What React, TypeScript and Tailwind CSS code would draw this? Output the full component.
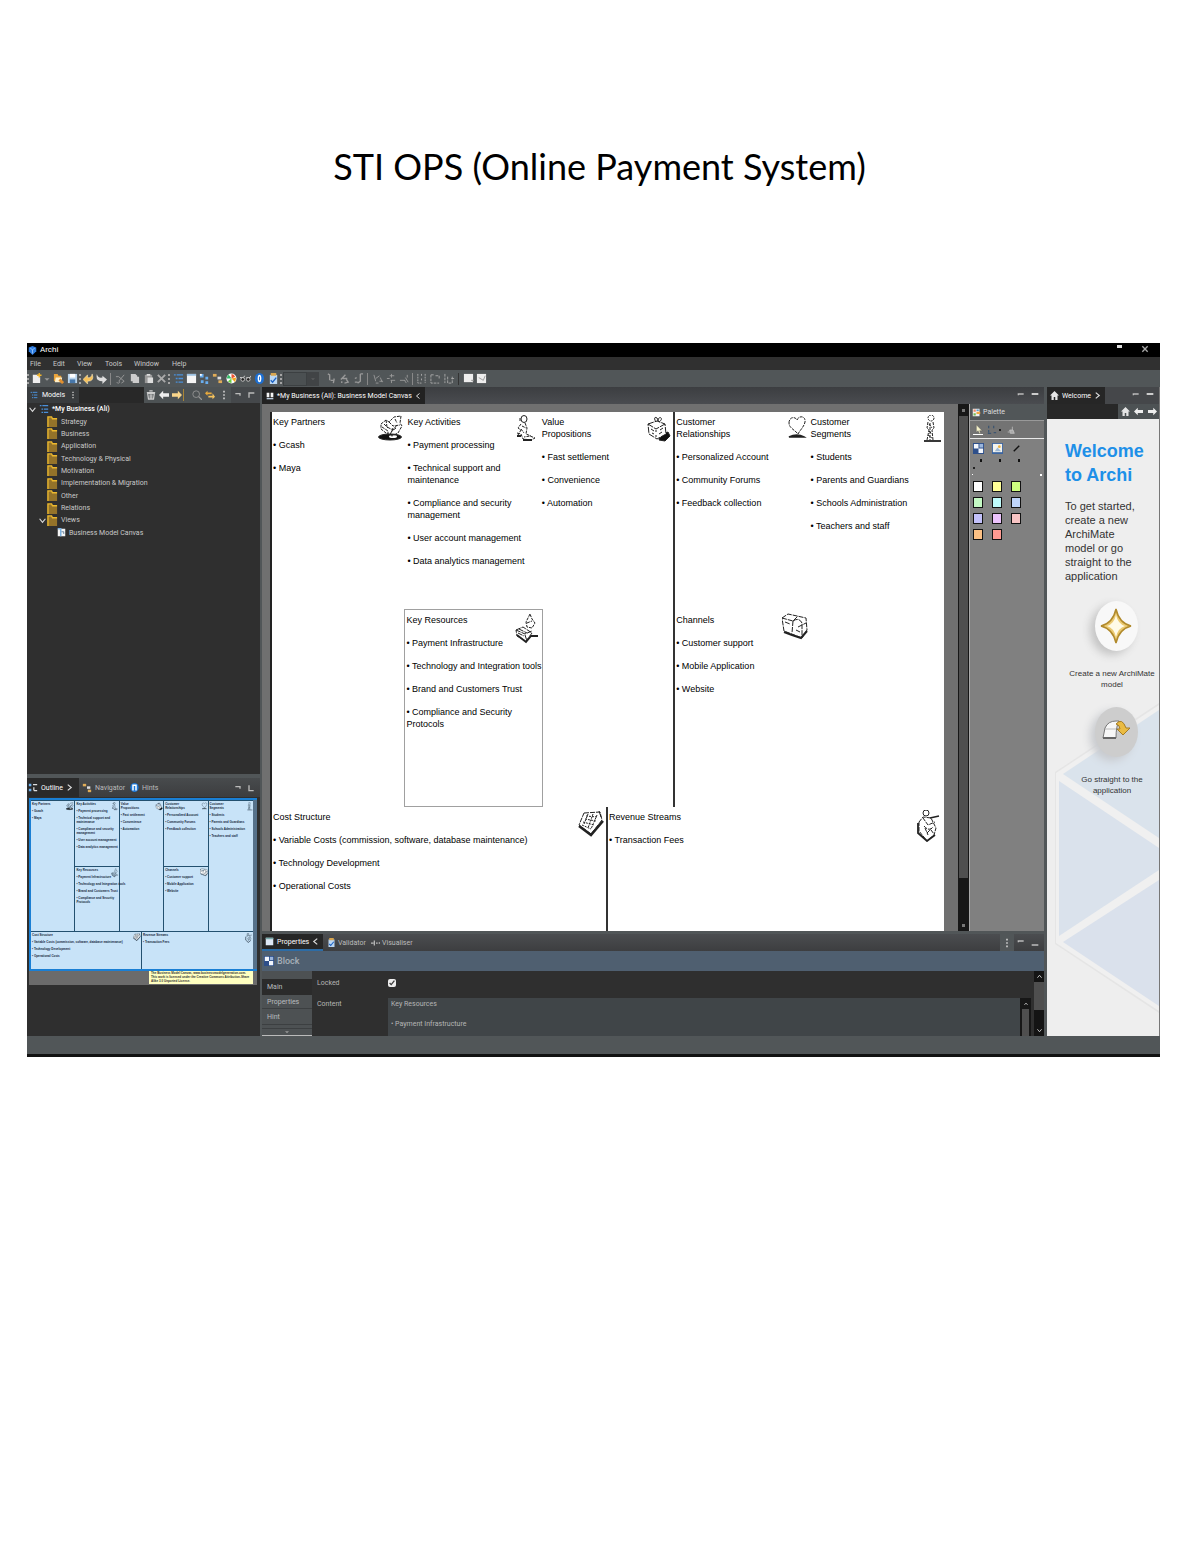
import React from "react";

type Block = { title: string[]; items: string[][]; art: string };

const blocks: Record<string, Block> = {
  partners: { title: ["Key Partners"], items: [["Gcash"], ["Maya"]], art: "partners" },
  activities: {
    title: ["Key Activities"],
    items: [
      ["Payment processing"],
      ["Technical support and", "maintenance"],
      ["Compliance and security", "management"],
      ["User account management"],
      ["Data analytics management"],
    ],
    art: "activities",
  },
  resources: {
    title: ["Key Resources"],
    items: [
      ["Payment Infrastructure"],
      ["Technology and Integration tools"],
      ["Brand and Customers Trust"],
      ["Compliance and Security", "Protocols"],
    ],
    art: "resources",
  },
  value: {
    title: ["Value", "Propositions"],
    items: [["Fast settlement"], ["Convenience"], ["Automation"]],
    art: "value",
  },
  relationships: {
    title: ["Customer", "Relationships"],
    items: [["Personalized Account"], ["Community Forums"], ["Feedback collection"]],
    art: "relationships",
  },
  channels: {
    title: ["Channels"],
    items: [["Customer support"], ["Mobile Application"], ["Website"]],
    art: "channels",
  },
  segments: {
    title: ["Customer", "Segments"],
    items: [["Students"], ["Parents and Guardians"], ["Schools Administration"], ["Teachers and staff"]],
    art: "segments",
  },
  cost: {
    title: ["Cost Structure"],
    items: [
      ["Variable Costs (commission, software, database maintenance)"],
      ["Technology Development"],
      ["Operational Costs"],
    ],
    art: "cost",
  },
  revenue: { title: ["Revenue Streams"], items: [["Transaction Fees"]], art: "revenue" },
};

const art: Record<string, React.ReactNode> = {
  partners: (
    <>
      <ellipse cx="12" cy="22" rx="11.5" ry="3" fill="#111" />
      <ellipse cx="15" cy="21.500" rx="4" ry="1.500" fill="#fff" stroke="none" />
      <path d="M3 9l5-4 3 2 5-5 7-1-1 7 2 3-4 7-6 3-6-3-5-4zM8 5l1 7 6 3 4-5M11 7l4 4 7-1M4 12l6 4v5M15 13l-3 7M6 9l4 4M17 4l2 4M13 17l5-4" strokeDasharray="3 1" />
    </>
  ),
  activities: (
    <g transform="translate(2 0)">
      <ellipse cx="9" cy="4" rx="3" ry="3.500" />
      <path d="M5 3v4M6 9l-3 4 3 2-3 5M10 8l2 5-1 6 5 2M2 18l4 1 2 5 8 1 4-2-5-2-6 1M7 11l4 2M6 14l3 4" strokeDasharray="3 1" />
      <path d="M2 21h4M8 25h9" strokeWidth="1.800" />
    </g>
  ),
  value: (
    <g transform="translate(2 0)">
      <path d="M14 20l7-3 2 4-5 5-6-1z" fill="#111" />
      <path d="M1 9l9-3 8 3 1 10-9 5-8-5zM1 9l8 5 9-5" fill="#fff" strokeDasharray="6 1" />
      <path d="M9 7c-4-6 2-6 2-1 0-6 7-3 1 1M4 14l3 2M13 15l3-2M12 19l3-2M5 18l2 1M9 15v2M9 20v2" />
    </g>
  ),
  relationships: (
    <g transform="translate(5 0)">
      <path d="M2 8c0-6 6-7 8-3 2-5 9-4 8 2-1 5-5 8-7 12-3-4-9-6-9-11z" strokeDasharray="3 1" />
      <path d="M2 22q8-4 15 0z" fill="#111" strokeWidth="1.500" />
    </g>
  ),
  segments: (
    <g transform="translate(7 0)">
      <ellipse cx="8" cy="3" rx="3" ry="3" strokeDasharray="2 1" />
      <path d="M5 7l-1 6 2 2-2 10M10 7l1 6-2 2 1 10M7 8v17M6 9l3 4M6 16l3 3M5 20l4 3" strokeDasharray="3 1" />
      <path d="M1 26h17" strokeWidth="1.800" />
    </g>
  ),
  resources: (
    <>
      <path d="M16 1l-2 4-2 4 1 5 5 1 3-5-3-4zM13 10l5-2" strokeDasharray="3 1" />
      <path d="M2 17l7-3 9 6-6 8-9-5zM2 17l9 4 7-3M5 16l8 4M4 20l6 3M11 22l2 6" strokeDasharray="5 1" />
      <path d="M3 22l9 7 5-6h7" strokeWidth="1.800" />
    </>
  ),
  channels: (
    <g transform="translate(-1 0)">
      <path d="M1 5l6-4 18 4 1 12-5 8-18-7zM1 5l11 3 5-5M12 8l-1 12M12 8q6-4 9 2v12M17 14l8-4M4 9l5 2M15 17l4 2" fill="#fff" strokeDasharray="5 1" />
      <path d="M3 19l8 3 9 3 6-7" strokeWidth="2" />
    </g>
  ),
  cost: (
    <>
      <path d="M6 3l16-1 2 8-11 14L1 15z" fill="#fff" strokeDasharray="5 1" />
      <path d="M8 6l11 1M7 9l11 2M5 12l11 3M4 15l9 4M10 4L6 14M15 4l-5 14M19 5l-6 14" strokeDasharray="2 1" />
      <path d="M1 16l12 9L25 11" strokeWidth="2.500" />
      <path d="M21 1l2 6" />
    </>
  ),
  revenue: (
    <>
      <ellipse cx="10" cy="3" rx="3" ry="3" />
      <path d="M3 12l4-5 8 1 5 10-2 7-7 6-8-10zM7 8l5 7 7-3M8 16q5 6 9 1M11 23l5-5M9 18l3 7M15 20l3 4" strokeDasharray="4 1" />
      <path d="M2 13v10l9 8 8-6" strokeWidth="1.800" />
      <path d="M14 8l9-2" strokeWidth="1.500" />
    </>
  ),
};

function Sketch({ name }: { name: string }) {
  return (
    <svg viewBox="0 0 27 32" className="-mt-2 h-8 w-[27px] shrink-0" fill="none" stroke="#222" strokeWidth="1" aria-hidden>
      {art[name]}
    </svg>
  );
}

function Cell({ id, className = "" }: { id: string; className?: string }) {
  const b = blocks[id];
  const head = b.title.length === 2 ? "h-6" : "h-3";
  return (
    <section className={`min-w-0 px-px pt-1 font-['Liberation_Sans',sans-serif] text-[9px] leading-[12px] whitespace-nowrap text-black ${className}`}>
      <div className={`flex justify-between ${head}`}>
        <h2>
          {b.title.map((t) => (
            <span key={t} className="block">{t}</span>
          ))}
        </h2>
        <div className="pt-[7px]"><Sketch name={b.art} /></div>
      </div>
      <ul className="mt-[11px] flex flex-col gap-[11px]">
        {b.items.map((lines) => (
          <li key={lines[0]}>
            {lines.map((l, i) => (
              <span key={l} className="block">{i === 0 ? `• ${l}` : l}</span>
            ))}
          </li>
        ))}
      </ul>
    </section>
  );
}

function MiniCell({ id, className = "" }: { id: string; className?: string }) {
  const b = blocks[id];
  const head = b.title.length === 2 ? "h-[11px]" : "h-[7px]";
  return (
    <div className={`min-w-0 pt-px pl-px ${className}`}>
      <div className={`flex justify-between ${head}`}>
        <div>{b.title.map((t) => <p key={t}>{t}</p>)}</div>
        <svg viewBox="0 0 27 32" className="h-2.5 w-2 shrink-0" fill="none" stroke="#345" strokeWidth="1.500" aria-hidden>{art[b.art]}</svg>
      </div>
      <div className="flex flex-col gap-[3px]">
        {b.items.map((lines) => (
          <div key={lines[0]}>
            {lines.map((l, i) => <p key={l}>{i === 0 ? `• ${l}` : l}</p>)}
          </div>
        ))}
      </div>
    </div>
  );
}

const glyphs: Record<string, React.ReactNode> = {
  new: (<><path d="M2 2h6l2 2v7H2z" fill="#eee" /><path d="M9 0v5M6.500 2.500h5" stroke="#f3b62b" strokeWidth="1.500" /></>),
  caret: <path d="M3 5h6L6 8z" fill="#999" />,
  open: (<><path d="M1 1h4l1 2h3v6H1z" fill="#e9a43c" /><path d="M3 5h7l-1 5H2z" fill="#fff0c8" /><path d="M7 7l4 4" stroke="#e09030" strokeWidth="3" /></>),
  save: (<><path d="M1 1h10v10H1z" fill="#b8d4ee" /><path d="M3 1h6v4H3z" fill="#fff" /><path d="M3 7h6v4H3z" fill="#4777aa" /></>),
  undo: <path d="M0 7l5-5v3q4 1 5-4 3 8-5 8v3z" fill="#f6c15b" stroke="#fff3cf" strokeWidth=".5" />,
  redo: <path d="M12 7L7 3v2Q2 6 1 1q-2 8 6 8v3z" fill="#ddd" />,
  cut: <path d="M1 4h3l6 5M4 9l6-7M2 10a1.500 1.500 0 103-1M7 11l3-2" stroke="#999" fill="none" />,
  copy: <path d="M2 1h5l2 2v1h2v7H4V9H2z" fill="#ccc" />,
  paste: (<><path d="M2 2h8v9H2z" fill="#999" /><path d="M4 1h4v2H4zM5 5h6v6H5z" fill="#ddd" /></>),
  cross: <path d="M2 2l8 8M10 2l-8 8" stroke="#aaa" strokeWidth="2" />,
  tree: <path d="M1 2h2M4 2h7M3 6h2M6 6h5M3 10h2M6 10h5" stroke="#4a90d9" strokeWidth="1.500" />,
  window: (<><path d="M1 1h10v10H1z" fill="#f5f5f5" /><path d="M1 1h10v2H1z" fill="#9bc0e0" /></>),
  nav: (<><path d="M1 1h4v4H1zM7 4h3v3H7zM7 9h3v3H7zM2 8h3v3H2z" fill="#69aef0" /><path d="M1 1h2v2H1z" fill="#fff" /></>),
  rel: (<><path d="M1 1h4v3H1z" fill="#e0ac58" /><path d="M6 4h4v3H6z" fill="#ddd" /><path d="M7 8h4v3H7z" fill="#e0ac58" /></>),
  swatch: (<><circle cx="6" cy="6" r="5.500" fill="#fff" /><path d="M6 6V1a5 5 0 014 3z" fill="#e53" /><path d="M6 6H1a5 5 0 012-4z" fill="#3b6" /><path d="M6 6l4 4 1-5z" fill="#f4a51c" /><path d="M6 6v5a5 5 0 01-4-2z" fill="#6c4" /></>),
  glasses: (<><path d="M0 5h4l1-2M7 5h4l1-2" stroke="#ddd" fill="none" /><circle cx="3" cy="7" r="2" fill="#222" stroke="#ccc" /><circle cx="9" cy="7" r="2" fill="#222" stroke="#ccc" /></>),
  info: (<><ellipse cx="6" cy="6" rx="5" ry="6" fill="#1d6fd1" /><ellipse cx="6" cy="6" rx="2" ry="4" fill="#fff" /><path d="M6 4v4" stroke="#1d6fd1" /></>),
  check: (<><path d="M2 2h8v10H2z" fill="#bcd7f2" /><path d="M3 0h6v3H3z" fill="#d9a64f" /><path d="M3 8l2 2 4-5" stroke="#1c62c4" strokeWidth="1.500" fill="none" /></>),
  f1: <path d="M2 1l2 1v6M5 8h3M9 6l-1 5" stroke="#999" fill="none" strokeWidth="1.500" />,
  f2: <path d="M2 7l3-3 2-2M4 6h5M8 7l2 3-4 1M3 9v2" stroke="#999" fill="none" strokeWidth="1.500" />,
  f3: <path d="M8 1h3M8 1v8l-3 2M2 6l2-1M2 10h3" stroke="#999" fill="none" strokeWidth="1.500" />,
  a1: <path d="M1 2l2 7M3 6l4-3M7 9h4M8 5l2 5M3 11h3" stroke="#999" fill="none" />,
  a2: <path d="M1 6h3M6 1v4M4 3h5M6 8v3M5 8h5" stroke="#999" fill="none" />,
  a3: <path d="M1 8h6M7 5l3 5M9 2v3M6 8l2 3" stroke="#999" fill="none" />,
  g1: <path d="M2 1v10h4M6 1v3M6 6v3M10 1v10" stroke="#aaa" fill="none" strokeDasharray="2 1" />,
  g2: <path d="M1 2h4M1 2v9h9M6 3h4v4" stroke="#aaa" fill="none" strokeDasharray="3 1" />,
  g3: <path d="M1 1v10M4 4v7h5V3M8 6h4" stroke="#aaa" fill="none" strokeDasharray="3 1" />,
  block: (<><path d="M1 1h10v9H1z" fill="#eee" /><path d="M9 8h3M10 10h1" stroke="#888" /></>),
  note: (<><path d="M1 1h10v10H1z" fill="#eee" /><path d="M3 5l5 3 2-5" stroke="#999" fill="none" /></>),
  trash: <path d="M1 3h10M4 1h4M2 4h8l-1 7H3zM5 5v6M7 5v6" stroke="#ccc" fill="none" strokeWidth="1.500" />,
  left: <path d="M0 6l5-5v3h7v4H5v3z" fill="#eee" />,
  right: <path d="M12 6L7 1v3H0v4h7v3z" fill="#eee" />,
  rightGold: <path d="M12 6L7 1v3H0v4h7v3z" fill="#f9d58a" />,
  search: <><circle cx="5" cy="5" r="4" stroke="#999" fill="none" /><path d="M8 8l4 4" stroke="#999" strokeWidth="1.500" /></>,
  link: <><path d="M3 1L0 4l3 3V5h5V3H3z" fill="#e8a93c" /><path d="M9 4l3 4-3 3V9H4V7h5z" fill="#f4c25e" /></>,
  dots: <path d="M6 1v2M6 5v2M6 9v2" stroke="#ccc" strokeWidth="2" />,
  min: <path d="M2 4h8M9 4v3" stroke="#bbb" strokeWidth="2" fill="none" />,
  max: <path d="M3 10V3h8" stroke="#bbb" strokeWidth="2" fill="none" />,
  minL: <path d="M2 5V3h8" stroke="#bbb" strokeWidth="2" fill="none" />,
  bar: <path d="M1 3h10" stroke="#ccc" strokeWidth="3" />,
  low: <path d="M1 9h10" stroke="#ccc" strokeWidth="2" />,
  corner: <path d="M3 2v8h7" stroke="#bbb" strokeWidth="2" fill="none" />,
  close: <path d="M3 1l6 5-6 5" stroke="#ddd" strokeWidth="2" fill="none" />,
  closeL: <path d="M9 1L3 6l6 5" stroke="#ddd" strokeWidth="2" fill="none" />,
  folder: (<><path d="M1 1h4l1 2h5v9H1z" fill="#94732a" /><path d="M1 12V1h4l1 2h5" stroke="#edb92e" strokeWidth="1.500" fill="none" /></>),
  view: (<><path d="M1 1h10v10H1z" fill="#f5f5f5" /><path d="M1 1h4v10" stroke="#7eb3e2" strokeWidth="2" fill="none" /><path d="M6 5h3v3" stroke="#468" fill="none" /></>),
  tab: (<><path d="M1 1h4v7H1zM7 1h4v7H7z" fill="#f5f5f5" /><path d="M1 10h10" stroke="#bcd" strokeWidth="2" /></>),
  home: (<><path d="M6 0l6 6h-2v6H7V8H5v4H2V6H0z" fill="#e5e5e5" /></>),
  archi: (<><path d="M6 0l5 2v5l-5 5-5-5V2z" fill="#2f7de0" /><path d="M3 3l3 2 3-2M6 5v5" stroke="#a9d0ff" fill="none" /></>),
  props: (<><path d="M1 1h10v10H1z" fill="#dfe8f5" /><path d="M1 2h10" stroke="#7aa" strokeWidth="2" /></>),
  outline: (<><path d="M1 1h3v3H1zM1 7h3v3H1z" fill="#6db0ee" /><path d="M6 2h5M7 5v4M7 9h4" stroke="#ddd" strokeWidth="1.500" fill="none" /></>),
  hints: (<><ellipse cx="6" cy="6" rx="5.500" ry="6" fill="#1d78d8" /><path d="M4 3v7M8 3v7M3 3h6" stroke="#fff" strokeWidth="2" /></>),
  vis: <path d="M0 6h3M4 3v6M6 6h2M10 5v2" stroke="#bbb" strokeWidth="1.500" />,
  palette: (<><path d="M1 1h9v10H1z" fill="#f0f0f0" /><path d="M2 2h3v3H2z" fill="#e86" /><path d="M6 5h5v3H6z" fill="#f2a742" /><path d="M2 7h3v3H2z" fill="#7b5" /><path d="M6 2h3v2H6z" fill="#59c" /></>),
  blocks: (<><path d="M0 0h12v12H0z" fill="#2e4f8a" /><path d="M1 1h5v5H1zM6 6h5v5H6z" fill="#f2f6fc" /><path d="M7 1h4v4H7z" fill="#9ab5dc" /></>),
  sticky: (<><path d="M0 0h12v12H0z" fill="#3c65a0" /><path d="M1 1h10v9H1z" fill="#f4f4ee" /><path d="M3 9l3-4 4 4z" fill="#9db9d6" /><circle cx="8" cy="4" r="1.500" fill="#efb23f" /></>),
  slash: <path d="M3 9l6-6" stroke="#111" strokeWidth="1.500" />,
  cursor: <path d="M4 1v9l2-2 2 4 1-1-1-3h3z" fill="#f4f0c8" stroke="#555" strokeWidth=".5" />,
  marquee: <path d="M2 1v3M2 6v3M8 1v3M8 9h3M1 10h4" stroke="#3d5570" strokeWidth="1.500" />,
  wand: <path d="M8 1v5M4 6h5l2 5H5zM1 9h3" fill="#aaa" stroke="#ccc" />,
};

function Icon({ name, className = "size-3" }: { name: string; className?: string }) {
  return (
    <svg viewBox="0 0 12 12" className={`shrink-0 ${className}`} fill="none" aria-hidden>
      {glyphs[name]}
    </svg>
  );
}

function IconButton({ name, label, className = "w-3.5", icon = "size-[11px]" }: { name: string; label: string; className?: string; icon?: string }) {
  return (
    <button type="button" aria-label={label} className={`flex h-full shrink-0 items-center justify-center ${className}`}>
      <Icon name={name} className={icon} />
    </button>
  );
}

const Grip = () => <div className="h-2.5 w-[3px] shrink-0 border-l-2 border-dotted border-[#a5a5a5]" />;

const menus = ["File", "Edit", "View", "Tools", "Window", "Help"];
const menuWidths = ["w-[23px]", "w-[24px]", "w-[28px]", "w-[29px]", "w-[38px]", "w-[30px]"];

const folders = ["Strategy", "Business", "Application", "Technology & Physical", "Motivation", "Implementation & Migration", "Other", "Relations"];

const swatches = [
  "bg-white", "bg-[#ffff97]", "bg-[#cfff80]", "bg-[#c4fac4]", "bg-[#bffcfc]", "bg-[#bfd5fa]",
  "bg-[#c3c1fb]", "bg-[#ecc3fd]", "bg-[#f8c4c4]", "bg-[#fcc084]", "bg-[#ff9a92]",
];

function Toolbar() {
  return (
    <div role="toolbar" aria-label="Main" className="flex h-[17px] items-center overflow-hidden bg-[#515658]">
      <Grip />
      <IconButton name="new" label="New" className="w-[13px]" />
      <IconButton name="caret" label="New options" className="w-2" icon="size-2.5" />
      <IconButton name="open" label="Open" />
      <IconButton name="save" label="Save" />
      <Grip />
      <IconButton name="undo" label="Undo" className="w-[13px]" />
      <IconButton name="redo" label="Redo" className="w-[13px]" />
      <div className="mx-0.5 h-3 w-px shrink-0 bg-[#888]" />
      <IconButton name="cut" label="Cut" />
      <IconButton name="copy" label="Copy" />
      <IconButton name="paste" label="Paste" />
      <IconButton name="cross" label="Delete" className="w-[13px]" />
      <Grip />
      <IconButton name="tree" label="Model tree" />
      <IconButton name="window" label="Properties" className="w-[13px]" />
      <IconButton name="nav" label="Outline" className="w-[13px]" />
      <IconButton name="rel" label="Navigator" className="w-[13px]" />
      <IconButton name="swatch" label="Palette" />
      <IconButton name="glasses" label="Visualiser" />
      <IconButton name="info" label="Hints" />
      <IconButton name="check" label="Validator" />
      <Grip />
      <select aria-label="Zoom" disabled className="h-3.5 w-6 shrink-0 appearance-none border border-[#3c4042] bg-[#4b5052]" />
      <div className="flex h-3.5 w-3 shrink-0 items-center justify-center bg-[#414446]"><Icon name="caret" className="size-2 opacity-30" /></div>
      <div className="w-[5px] shrink-0" />
      <IconButton name="f1" label="Font" />
      <IconButton name="f2" label="Fill colour" className="w-[13px]" />
      <IconButton name="f3" label="Line colour" />
      <div className="mr-[3px] ml-0.5 h-3 w-px shrink-0 bg-[#888]" />
      <IconButton name="a1" label="Align left" />
      <IconButton name="a2" label="Align centre" className="w-[13px]" />
      <IconButton name="a3" label="Align right" className="w-[13px]" />
      <div className="mx-px h-3 w-px shrink-0 bg-[#888]" />
      <IconButton name="g1" label="Match width" />
      <IconButton name="g2" label="Match height" />
      <IconButton name="g3" label="Match size" />
      <div className="mx-0.5 h-3 w-px shrink-0 bg-[#333]" />
      <IconButton name="block" label="Block" />
      <IconButton name="note" label="Note" className="w-[13px]" />
    </div>
  );
}

function ModelsPanel() {
  return (
    <section className="flex h-[387px] flex-col">
      <div className="flex h-4 bg-[#45484b]">
        <div className="flex w-[52px] items-center gap-1 bg-[#393c3e] pl-[3px] text-white">
          <Icon name="tree" className="size-2" /> Models <Icon name="dots" className="size-2" />
        </div>
        <div className="flex-1 bg-[#282828]" />
        <div className="flex bg-[#4d5254]">
          <IconButton name="trash" label="Delete" className="w-[13px]" icon="size-2.5" />
          <IconButton name="left" label="Back" className="w-[13px]" icon="size-2.5" />
          <IconButton name="rightGold" label="Forward" className="w-[13px]" icon="size-2.5" />
          <div className="my-0.5 mr-1.5 w-px bg-[#a98537]" />
          <IconButton name="search" label="Search" className="w-[13px]" icon="size-2.5" />
          <IconButton name="link" label="Link to view" icon="size-2.5" />
          <IconButton name="dots" label="View menu" icon="size-2.5" />
        </div>
        <IconButton name="min" label="Minimize" icon="size-2" className="w-[13px]" />
        <IconButton name="max" label="Maximize" icon="size-2" className="mr-[3px] w-[13px]" />
      </div>
      <div className="flex-1 bg-[#2f2f2f]">
        <ul role="tree" className="grid h-[136px] grid-rows-11 items-center text-[#c9c9c9]">
          <li role="treeitem" className="flex items-center gap-[3px] pl-0.5 font-medium text-white">
            <Icon name="close" className="size-[7px] rotate-90" />
            <Icon name="tree" className="size-2.5" /> *My Business (Ali)
          </li>
          {folders.map((f) => (
            <li role="treeitem" key={f} className="flex items-center gap-[3px] pl-5">
              <Icon name="folder" className="size-[11px]" /> {f}
            </li>
          ))}
          <li role="treeitem" className="flex items-center gap-[3px] pl-3">
            <Icon name="close" className="mr-[-2px] size-[7px] rotate-90" />
            <Icon name="folder" className="size-[11px]" /> Views
          </li>
          <li role="treeitem" className="flex items-center gap-[3px] pl-[30px]">
            <Icon name="view" className="size-[9px]" /> Business Model Canvas
          </li>
        </ul>
      </div>
    </section>
  );
}

function OutlinePanel() {
  const line = "border-[#23506f]";
  return (
    <section className="mt-1 flex flex-1 flex-col bg-[#2f2f2f]">
      <div className="flex h-[19px] items-center bg-linear-to-b from-[#484b4d] to-[#3c3d3f] text-[#bbb]">
        <button type="button" className="flex h-full w-[52px] items-center gap-[3px] bg-[#2a2a2a] pl-px text-white">
          <Icon name="outline" className="size-2.5" /> Outline <Icon name="close" className="size-[7px]" />
        </button>
        <button type="button" className="flex w-[51px] items-center gap-[3px] pl-[3px] text-left">
          <Icon name="rel" className="size-2.5" /> Navigator
        </button>
        <button type="button" className="flex items-center gap-[3px]">
          <Icon name="hints" className="size-[9px]" /> Hints
        </button>
        <div className="flex-1" />
        <IconButton name="min" label="Minimize" icon="size-2" className="w-[13px]" />
        <IconButton name="corner" label="Maximize" icon="size-2" className="mr-[3px] w-[13px]" />
      </div>
      <div className="mx-0.5 mr-[3px] mt-px bg-[#6b6b6b]">
        <div className="border-2 border-r-0 border-[#1a7fd4] bg-[#56718a] pr-1">
          <div className={`border-t bg-[#c8e3f8] font-['Liberation_Sans',sans-serif] text-[3px] leading-[4px] font-bold whitespace-nowrap text-[#16283c] ${line}`}>
            <div className="grid h-[130px] grid-cols-5">
              <MiniCell id="partners" className={`border-r ${line}`} />
              <div className={`grid min-w-0 grid-rows-2 border-r ${line}`}>
                <MiniCell id="activities" />
                <MiniCell id="resources" className={`border-t ${line}`} />
              </div>
              <MiniCell id="value" className={`border-r ${line}`} />
              <div className={`grid min-w-0 grid-rows-2 border-r ${line}`}>
                <MiniCell id="relationships" />
                <MiniCell id="channels" className={`border-t ${line}`} />
              </div>
              <MiniCell id="segments" />
            </div>
            <div className={`grid h-[38px] grid-cols-2 border-t ${line}`}>
              <MiniCell id="cost" className={`border-r ${line}`} />
              <MiniCell id="revenue" />
            </div>
          </div>
        </div>
        <div className="flex h-3.5 justify-end pr-1">
          <p className="h-[13px] w-[104px] bg-[#ffffc0] px-0.5 font-['Liberation_Sans',sans-serif] text-[3px] leading-[4px] font-bold text-[#333]">
            The Business Model Canvas, www.businessmodelgeneration.com. This work is licensed under the Creative Commons Attribution-Share Alike 3.0 Unported License.
          </p>
        </div>
      </div>
    </section>
  );
}

function Palette() {
  return (
    <aside className="flex w-[75px] shrink-0 flex-col border-l border-[#aaa] bg-[#808080]">
      <div className="flex h-4 items-center gap-0.5 bg-[#515658] pl-0.5 text-[#ddd]">
        <Icon name="palette" className="size-[9px]" /> Palette
      </div>
      <div className="flex h-[19px] items-center border-t border-b border-t-[#999] border-b-[#e8e8e8] bg-[#737373] pl-[3px]">
        <button type="button" aria-label="Select" className="border-b border-white"><Icon name="cursor" className="size-2.5" /></button>
        <button type="button" aria-label="Marquee" className="ml-1"><Icon name="marquee" className="size-2.5" /></button>
        <span className="ml-0.5 size-0.5 bg-[#222]" />
        <button type="button" aria-label="Format painter" className="ml-1.5"><Icon name="wand" className="size-2" /></button>
      </div>
      <div className="grid grid-cols-[repeat(3,19px)] justify-items-start gap-y-[5px] pt-1 pl-[3px]">
        <IconButton name="blocks" label="Block" className="h-3 w-[11px]" />
        <IconButton name="sticky" label="Sticky" className="h-3 w-[11px]" />
        <IconButton name="slash" label="Connection" className="h-3 w-[11px]" />
        {["a", "b", "c"].map((k) => (
          <span key={k} className="h-[3px] w-[9px] border-r-2 border-[#111]" />
        ))}
      </div>
      <div className="mt-[5px] pl-[3px]"><i className="block size-0.5 bg-[#222]" /></div>
      <div className="mt-[5px] flex justify-between px-0.5"><i className="size-px bg-white" /><i className="size-0.5 bg-white" /></div>
      <div className="mt-[5px] grid grid-cols-[repeat(3,19px)] gap-y-[5px] pl-[3px]">
        {swatches.map((c, i) => (
          <button key={c} type="button" aria-label={`Colour ${i + 1}`} className={`h-[11px] w-2.5 border border-[#111] ${c}`} />
        ))}
      </div>
    </aside>
  );
}

function Editor() {
  return (
    <section className="flex flex-col">
      <div className="flex h-[17px] items-center bg-linear-to-b from-[#3c3e41] to-[#4a4c50]">
        <button type="button" className="flex h-full items-center gap-[3px] bg-[#222] pr-1 pl-1 whitespace-nowrap text-white">
          <Icon name="tab" className="size-2" /> *My Business (Ali): Business Model Canvas <Icon name="closeL" className="size-1.5" />
        </button>
        <div className="flex-1" />
        <IconButton name="minL" label="Minimize" icon="size-2" />
        <IconButton name="bar" label="Maximize" icon="size-2" className="mr-0.5 w-3.5" />
      </div>
      <div className="flex h-[527px] bg-[#707070]">
        <div className="mt-2 mr-3.5 ml-2 flex min-w-0 flex-1 flex-col border-l-2 border-[#222] bg-white">
          <div className="grid h-[395px] grid-cols-5">
            <Cell id="partners" />
            <div className="grid min-w-0 grid-rows-2">
              <Cell id="activities" />
              <Cell id="resources" className="-mt-px -mr-0.5 -ml-0.5 border border-[#a0a0a0]" />
            </div>
            <Cell id="value" className="border-r-2 border-[#333]" />
            <div className="grid min-w-0 grid-rows-2">
              <Cell id="relationships" />
              <Cell id="channels" />
            </div>
            <Cell id="segments" />
          </div>
          <div className="grid flex-1 grid-cols-2">
            <Cell id="cost" className="border-r-2 border-[#333]" />
            <Cell id="revenue" />
          </div>
        </div>
        <div className="flex w-[11px] shrink-0 flex-col bg-[#171717]">
          <div className="flex h-3 items-center justify-center"><i className="size-[3px] bg-[#777]" /></div>
          <div className="mx-px h-[462px] bg-[#4f4f4f]" />
          <div className="flex flex-1 items-end justify-center pb-1"><i className="size-[3px] bg-[#777]" /></div>
        </div>
        <Palette />
      </div>
    </section>
  );
}

function PropertiesPanel() {
  return (
    <section className="mt-[3px] flex flex-1 flex-col">
      <div className="flex h-[17px] items-center bg-linear-to-b from-[#4b4d50] to-[#3d3e40] text-[#bbb]">
        <button type="button" className="flex h-full w-[61px] items-center gap-[3px] border-b-2 border-[#2c6ca6] bg-[#262626] pl-[3px] text-white">
          <Icon name="props" className="size-[9px]" /> Properties <Icon name="closeL" className="size-[7px]" />
        </button>
        <button type="button" className="flex w-12 items-center gap-0.5 pl-1 text-left">
          <Icon name="check" className="size-[9px]" /> Validator
        </button>
        <button type="button" className="flex items-center gap-px">
          <Icon name="vis" className="size-2.5" /> Visualiser
        </button>
        <div className="flex-1" />
        <IconButton name="dots" label="View menu" className="w-3.5 bg-[#515658]" icon="size-2.5" />
        <IconButton name="minL" label="Minimize" icon="size-2" />
        <IconButton name="low" label="Maximize" icon="size-2" className="mr-0.5 w-3.5" />
      </div>
      <div className="flex h-5 items-center gap-[3px] bg-[#4f5f70] pl-0.5 text-[9px] font-medium text-[#a7b0b9]">
        <Icon name="blocks" className="size-2.5" /> Block
      </div>
      <div className="flex flex-1">
        <div className="flex w-[50px] shrink-0 flex-col bg-[#4d5153] pt-2 text-[#b9bdbf]">
          <button type="button" className="h-4 bg-[#2b2b2b] pl-[5px] text-left">Main</button>
          <button type="button" className="h-3.5 border-b border-[#3c3f41] pl-[5px] text-left">Properties</button>
          <button type="button" className="h-4 border-b border-[#3c3f41] pl-[5px] text-left">Hint</button>
          <button type="button" aria-label="More" className="mt-[3px] flex h-2 items-center justify-center border-t border-b border-t-[#3c3f41] border-b-[#bbb]"><Icon name="caret" className="size-2" /></button>
        </div>
        <div className="grid min-w-0 flex-1 grid-cols-[71px_1fr] grid-rows-[27px_38px] bg-[#2f2f2f] pl-[5px] text-[#b5b5b5]">
          <label htmlFor="locked" className="pt-2 leading-[9px]">Locked</label>
          <input id="locked" type="checkbox" defaultChecked className="mt-2 size-2 accent-[#eee]" />
          <label htmlFor="content" className="pt-0.5 leading-[9px]">Content</label>
          <div className="flex bg-[#404548]">
            <textarea
              id="content"
              className="min-w-0 flex-1 resize-none overflow-hidden bg-transparent px-[3px] pt-px leading-[10px] outline-none"
              defaultValue={"Key Resources\n\n• Payment Infrastructure"}
            />
            <div className="flex w-[11px] flex-col bg-[#171717]">
              <div className="flex h-[11px] items-center justify-center"><Icon name="closeL" className="size-1 rotate-90" /></div>
              <div className="mx-0.5 flex-1 bg-[#4f4f4f]" />
            </div>
            <div className="w-[3px] bg-[#2f2f2f]" />
          </div>
        </div>
        <div className="flex w-2.5 shrink-0 flex-col items-center bg-[#141414]">
          <Icon name="closeL" className="my-[3px] size-[5px] rotate-90" />
          <div className="h-7 w-2.5 bg-[#4f4f4f]" />
          <Icon name="close" className="mt-auto mb-[3px] size-[5px] rotate-90" />
        </div>
      </div>
    </section>
  );
}

function WelcomePanel() {
  return (
    <aside className="ml-[3px] flex w-[113px] shrink-0 flex-col border-r border-[#777]">
      <div className="flex h-[17px] items-center bg-[#45474a]">
        <button type="button" className="flex h-full w-[58px] items-center gap-[3px] bg-[#262626] pl-[3px] text-white">
          <Icon name="home" className="size-[9px]" /> Welcome <Icon name="close" className="size-[7px]" />
        </button>
        <div className="flex-1" />
        <IconButton name="minL" label="Minimize" icon="size-2" />
        <IconButton name="bar" label="Maximize" icon="size-2" className="mr-0.5 w-3.5" />
      </div>
      <div className="flex h-[15px] justify-end bg-[#282828]">
        <div className="flex bg-[#4d5254]">
          <IconButton name="home" label="Home" icon="size-[9px]" />
          <IconButton name="left" label="Back" icon="size-[9px]" className="w-[13px]" />
          <IconButton name="right" label="Forward" icon="size-[9px]" />
        </div>
      </div>
      <div className="relative flex-1 bg-[#eee] font-['Liberation_Sans',sans-serif]">
        <svg viewBox="0 0 112 617" preserveAspectRatio="xMaxYMin slice" className="absolute inset-0 h-full w-full" aria-hidden>
          <path d="M112 284L8 353v172l104 69z" fill="#e5e5e5" />
          <path d="M112 286L9 354v170l103 68z" fill="#f0f0f0" />
          <path d="M112 291L16 355l96 64z" fill="#dae3ec" />
          <path d="M12 362v155l100-66v-22z" fill="#dae2ec" />
          <path d="M112 461L16 523l96 64z" fill="#dae1ec" />
        </svg>
        <div className="relative pt-5">
          <h2 className="pl-[18px] text-[18px] leading-[24px] font-bold text-[#1e90e8]">Welcome<br />to Archi</h2>
          <p className="mt-3 pl-[18px] text-[11px] leading-[14px] text-[#333]">
            To get started,<br />create a new<br />ArchiMate<br />model or go<br />straight to the<br />application
          </p>
          <a href="#new" className="mt-[18px] flex flex-col items-center pl-[18px] text-center text-[8px] leading-[11px] whitespace-nowrap text-[#333]">
            <span className="ml-2 flex h-[50px] w-[43px] items-center justify-center rounded-[50%] bg-[#f8f8f8] shadow-[-5px_4px_8px_#c4c4c4]">
              <svg viewBox="0 0 32 36" className="h-9 w-8" aria-hidden>
                <path d="M16 1q3 14 15 17-12 3-15 17-3-14-15-17Q13 15 16 1z" fill="#eccb73" stroke="#b18a2c" strokeWidth="1.500" />
                <path d="M16 7q2 9 9 11-7 2-9 11-2-9-9-11 7-2 9-11z" fill="#fffbe8" />
              </svg>
            </span>
            <span className="mt-[17px]">Create a new ArchiMate<br />model</span>
          </a>
          <a href="#app" className="mt-[17px] flex flex-col items-center pl-[18px] text-center text-[8px] leading-[11px] whitespace-nowrap text-[#333]">
            <span className="ml-2 flex h-[50px] w-[43px] items-center justify-center rounded-[50%] bg-[#cdcdcd] shadow-[-5px_4px_8px_#c8cace]">
              <svg viewBox="0 0 28 22" className="-mt-1 h-[22px] w-7" aria-hidden>
                <path d="M1 19L3 9Q6 2 14 2h3q-3 5-3 17z" fill="#f7f7f7" stroke="#777" />
                <path d="M3 10h11" stroke="#bbb" />
                <path d="M1 19h13" stroke="#666" strokeWidth="2" />
                <path d="M14 5q6-7 10 4h4l-7 7-6-6h3q0-4-4-5z" fill="#eabb42" stroke="#a67c22" />
              </svg>
            </span>
            <span className="mt-[17px]">Go straight to the<br />application</span>
          </a>
        </div>
      </div>
    </aside>
  );
}

export default function App() {
  return (
    <main className="min-h-screen bg-white pt-[141px] pr-10 pl-[27px] font-['Roboto',sans-serif] text-[7px] leading-[12px]">
      <h1 className="mb-[152px] pl-3 text-center font-['Lato',sans-serif] text-[36px] leading-[50px] text-black">
        STI OPS (Online Payment System)
      </h1>
      <div className="flex flex-col bg-[#515658]">
        <header className="flex h-3.5 items-center gap-[3px] bg-black pl-px text-white">
          <Icon name="archi" className="size-[9px]" /> <span className="text-[8px]">Archi</span>
          <div className="flex-1" />
          <button type="button" aria-label="Restore" className="mr-4 mb-2 h-[3px] w-[5px] bg-[#ddd]" />
          <button type="button" aria-label="Close" className="mr-[11px] mb-0.5"><Icon name="cross" className="size-2" /></button>
        </header>
        <nav className="flex h-[13px] items-center bg-[#303030] pl-[3px] text-[#c8c8c8]">
          {menus.map((m, i) => (
            <button key={m} type="button" className={`text-left ${menuWidths[i]}`}>{m}</button>
          ))}
        </nav>
        <Toolbar />
        <div className="flex h-[649px]">
          <div className="mr-0.5 flex w-[233px] shrink-0 flex-col">
            <ModelsPanel />
            <OutlinePanel />
          </div>
          <div className="flex min-w-0 flex-1 flex-col">
            <Editor />
            <PropertiesPanel />
          </div>
          <WelcomePanel />
        </div>
        <footer className="h-[21px] border-b-[3px] border-[#111] bg-[#515658]" />
      </div>
    </main>
  );
}
